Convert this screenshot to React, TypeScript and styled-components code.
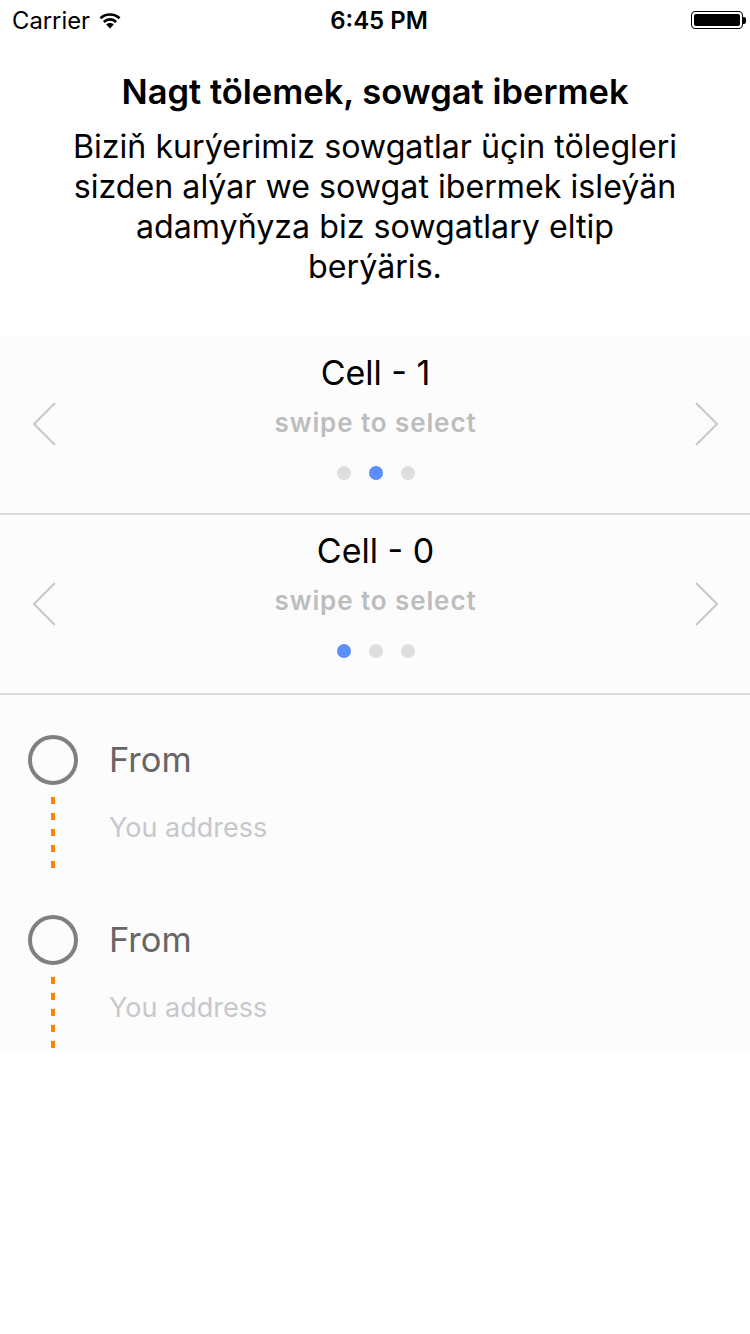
import React from "react";
import styled, { createGlobalStyle } from "styled-components";

const Global = createGlobalStyle`
  html, body { margin: 0; padding: 0; background: #ffffff; }
  body { font-family: Inter, "Liberation Sans", Arial, sans-serif; -webkit-font-smoothing: antialiased; }
  * { box-sizing: border-box; }
`;

const Screen = styled.div`
  width: 750px;
  min-height: 1334px;
  background: #ffffff;
  display: flex;
  flex-direction: column;
`;

const StatusBar = styled.div`
  height: 40px;
  display: grid;
  grid-template-columns: 1fr auto 1fr;
  align-items: center;
  padding: 0 4px 0 12px;
  color: #000;
  font-size: 23.8px;
`;

const Carrier = styled.div`
  display: flex;
  align-items: center;
  gap: 8px;
`;

const Time = styled.div`
  font-weight: 600;
  font-size: 24px;
`;

const BatteryWrap = styled.div`
  justify-self: end;
  display: flex;
  align-items: center;
`;

const Battery = styled.div`
  width: 52px;
  height: 18px;
  border: 1.5px solid #000;
  border-radius: 4px;
  padding: 2px;
  display: flex;
`;

const BatteryFill = styled.div`
  flex: 1;
  background: #000;
  border-radius: 2px;
`;

const BatteryNub = styled.div`
  width: 3px;
  height: 7px;
  background: #000;
  border-radius: 0 2px 2px 0;
`;

const Header = styled.header`
  display: flex;
  flex-direction: column;
  align-items: center;
  text-align: center;
  padding-top: 32px;
`;

const Title = styled.h1`
  margin: 0;
  font-size: 34.5px;
  line-height: 40px;
  font-weight: 600;
  color: #000;
`;

const Lead = styled.p`
  margin: 15px 0 0;
  font-size: 32.2px;
  line-height: 40px;
  color: #000;
`;

const Picker = styled.section`
  margin-top: 48px;
  background: #fcfcfc;
`;

const Cell = styled.div`
  height: 180px;
  border-bottom: 2px solid #dcdcdc;
  display: grid;
  grid-template-columns: 24px 1fr 24px;
  align-items: center;
  padding: 0 32px 0 33px;
`;

const CellCenter = styled.div<{ $top: number }>`
  display: flex;
  flex-direction: column;
  align-items: center;
  align-self: start;
  padding-top: ${(p) => p.$top}px;
`;

const CellTitle = styled.div`
  font-size: 34px;
  line-height: 40px;
  color: #000;
`;

const Hint = styled.div`
  margin-top: 15px;
  font-size: 26px;
  line-height: 30px;
  letter-spacing: 0.9px;
  font-weight: 600;
  color: #bdbdbd;
`;

const Dots = styled.div`
  margin-top: 28px;
  display: flex;
  gap: 18px;
`;

const Dot = styled.span<{ $active: boolean }>`
  width: 14px;
  height: 14px;
  border-radius: 50%;
  background: ${(p) => (p.$active ? "#5b8ff9" : "#dedede")};
`;

const Route = styled.section`
  background: #fcfcfc;
  padding: 40px 0 6px 28px;
  display: flex;
  flex-direction: column;
  gap: 47px;
`;

const Stop = styled.div`
  display: grid;
  grid-template-columns: 50px 1fr;
  column-gap: 31px;
`;

const Marker = styled.div`
  display: flex;
  flex-direction: column;
  align-items: center;
`;

const Ring = styled.div`
  width: 50px;
  height: 50px;
  border-radius: 50%;
  border: 4px solid #808080;
`;

const DashLine = styled.div`
  margin-top: 12px;
  width: 4px;
  height: 71px;
  background: repeating-linear-gradient(
    to bottom,
    #ff8400 0px,
    #ff8400 7px,
    transparent 7px,
    transparent 16px
  );
`;

const StopText = styled.div`
  display: flex;
  flex-direction: column;
`;

const StopLabel = styled.div`
  font-size: 34.5px;
  line-height: 50px;
  color: #666666;
`;

const StopAddress = styled.div`
  margin-top: 26px;
  font-size: 27px;
  line-height: 34px;
  color: #c7c7cd;
`;

const Chevron = ({ dir }: { dir: "left" | "right" }) => (
  <svg width="24" height="44" viewBox="0 0 24 44" fill="none">
    {dir === "left" ? (
      <polyline points="22,1 1,22 22,43" stroke="#c8c8c8" strokeWidth="2" />
    ) : (
      <polyline points="2,1 23,22 2,43" stroke="#c8c8c8" strokeWidth="2" />
    )}
  </svg>
);

const Wifi = () => (
  <svg width="24" height="18" viewBox="0 0 24 18">
    <path d="M12 17.5 L8.2 13.4 A5.6 5.6 0 0 1 15.8 13.4 Z" fill="#000" />
    <path d="M4.9 9.9 A10.4 10.4 0 0 1 19.1 9.9 L17.2 11.9 A7.6 7.6 0 0 0 6.8 11.9 Z" fill="#000" />
    <path d="M1.5 6.3 A15.3 15.3 0 0 1 22.5 6.3 L20.6 8.3 A12.5 12.5 0 0 0 3.4 8.3 Z" fill="#000" />
  </svg>
);

const cells = [
  { title: "Cell - 1", active: 1, top: 18 },
  { title: "Cell - 0", active: 0, top: 16 },
];

const stops = [
  { label: "From", address: "You address" },
  { label: "From", address: "You address" },
];

export default function App() {
  return (
    <Screen>
      <Global />
      <StatusBar>
        <Carrier>
          Carrier <Wifi />
        </Carrier>
        <Time>6:45 PM</Time>
        <BatteryWrap>
          <Battery>
            <BatteryFill />
          </Battery>
          <BatteryNub />
        </BatteryWrap>
      </StatusBar>

      <Header>
        <Title>Nagt tölemek, sowgat ibermek</Title>
        <Lead>
          Biziň kurýerimiz sowgatlar üçin tölegleri
          <br />
          sizden alýar we sowgat ibermek isleýän
          <br />
          adamyňyza biz sowgatlary eltip
          <br />
          berýäris.
        </Lead>
      </Header>

      <Picker>
        {cells.map((c) => (
          <Cell key={c.title}>
            <Chevron dir="left" />
            <CellCenter $top={c.top}>
              <CellTitle>{c.title}</CellTitle>
              <Hint>swipe to select</Hint>
              <Dots>
                {[0, 1, 2].map((i) => (
                  <Dot key={i} $active={i === c.active} />
                ))}
              </Dots>
            </CellCenter>
            <Chevron dir="right" />
          </Cell>
        ))}
      </Picker>

      <Route>
        {stops.map((s, i) => (
          <Stop key={i}>
            <Marker>
              <Ring />
              <DashLine />
            </Marker>
            <StopText>
              <StopLabel>{s.label}</StopLabel>
              <StopAddress>{s.address}</StopAddress>
            </StopText>
          </Stop>
        ))}
      </Route>
    </Screen>
  );
}
